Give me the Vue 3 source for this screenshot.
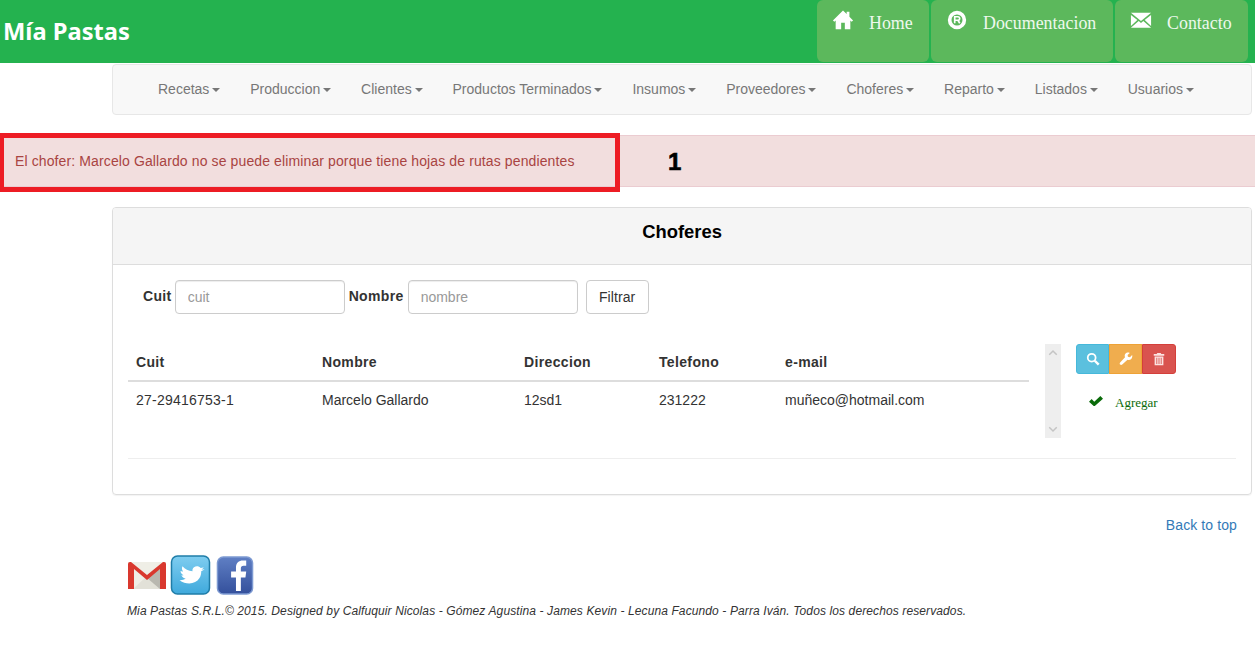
<template>
  <div class="page">
    <header class="top">
      <div class="brand">Mía Pastas</div>
      <div class="top-links">
        <a v-for="l in topLinks" :key="l.text" class="top-link" :style="{ width: l.w + 'px' }">
          <svg class="top-ico" viewBox="0 0 24 24">
            <path v-if="l.icon === 'home'" fill="#fff" d="M12 1.500 1 12.500l1.600 1.400L4 12.600V22h6v-7h4v7h6v-9.400l1.400 1.300 1.600-1.400L19 8.500V3h-3v2.500z" />
            <g v-else-if="l.icon === 'reg'" fill="none" stroke="#fff">
              <circle cx="12" cy="12" r="8" stroke-width="4" />
              <path stroke-width="1.800" d="M9.500 15.500v-7H13a1.900 1.900 0 0 1 0 3.800H9.500m3.500 0 2 3.200" />
            </g>
            <path v-else fill="#fff" d="M1 4h22L12 13zM1 6.500 8 12 1 18.500zM23 6.500 16 12l7 6.500zM9.500 13.200 12 15.300l2.500-2.100L23 20.500H1z" />
          </svg>
          <span>{{ l.text }}</span>
        </a>
      </div>
    </header>

    <nav class="menu">
      <a v-for="m in menu" :key="m" class="menu-item">{{ m }}<i class="caret"></i></a>
    </nav>

    <div class="alert">
      <span class="alert-text">El chofer: Marcelo Gallardo no se puede eliminar porque tiene hojas de rutas pendientes</span>
      <div class="mark"></div>
      <b class="mark-num">1</b>
    </div>

    <section class="panel">
      <h3 class="panel-head">Choferes</h3>
      <div class="panel-body">
        <form class="filter" @submit.prevent>
          <label class="lab">Cuit</label>
          <input class="inp" placeholder="cuit" />
          <label class="lab lab-2">Nombre</label>
          <input class="inp inp-2" placeholder="nombre" />
          <button class="btn-filter">Filtrar</button>
        </form>

        <div class="grid-row">
          <table class="tbl">
            <thead>
              <tr>
                <th class="c1">Cuit</th>
                <th class="c2">Nombre</th>
                <th class="c3">Direccion</th>
                <th class="c4">Telefono</th>
                <th>e-mail</th>
              </tr>
            </thead>
            <tbody>
              <tr>
                <td class="cuit">27-29416753-1</td>
                <td>Marcelo Gallardo</td>
                <td>12sd1</td>
                <td>231222</td>
                <td>muñeco@hotmail.com</td>
              </tr>
            </tbody>
          </table>

          <div class="scroll">
            <svg viewBox="0 0 16 12" class="arrow"><path d="M3 9l5-5 5 5" fill="none" stroke="#c4c4c4" stroke-width="2" /></svg>
            <svg viewBox="0 0 16 12" class="arrow"><path d="M3 3l5 5 5-5" fill="none" stroke="#c4c4c4" stroke-width="2" /></svg>
          </div>

          <div class="actions">
            <div class="btn-group">
              <button class="act act-info">
                <svg viewBox="0 0 16 16" class="act-ico"><circle cx="6.500" cy="6.500" r="4.500" fill="none" stroke="#fff" stroke-width="2" /><path d="M10 10l4.500 4.500" stroke="#fff" stroke-width="2.800" /></svg>
              </button>
              <button class="act act-warn">
                <svg viewBox="0 0 16 16" class="act-ico"><path fill="#fff" d="M15 3.500 12.500 6 10.200 5.500 9.800 3.500 12.300 1C10.300.2 8.300.8 7.300 2 6.400 3.200 6.300 4.700 6.900 6L1.300 12c-.7.800-.6 1.800 0 2.400.7.700 1.700.7 2.400 0L9.700 8.800c1.600.6 3.200.2 4.300-.9C15.100 6.800 15.500 5 15 3.500z" /></svg>
              </button>
              <button class="act act-del">
                <svg viewBox="0 0 16 16" class="act-ico"><path fill="#fbe3e2" fill-rule="evenodd" d="M6 1h4l.6 1.200H14v2H2v-2h3.400zM3 5.200h10V15H3zm2 1.400v7h1v-7zm2.500 0v7h1v-7zm2.500 0v7h1v-7z" /></svg>
              </button>
            </div>
            <a class="add">
              <svg viewBox="0 0 16 12" class="add-ico"><path fill="#0a6b0a" d="M0 6.500 3 3.500 6 6.500 13 0 16 3 6 12z" /></svg>
              <span>Agregar</span>
            </a>
          </div>
        </div>

        <hr class="rule" />
      </div>
    </section>

    <div class="back"><a>Back to top</a></div>

    <footer class="foot">
      <div class="social">
        <svg viewBox="0 0 40 29" class="gmail">
          <rect x="1" y="1" width="38" height="27" fill="#efeee6" />
          <path d="M6 28 20 15l14 13z" fill="#e2e1d8" />
          <path d="M33 7v21L20 17z" fill="#b9b8b0" />
          <path d="M1 3q0-2 2-2h1l16 13L36 1h1q2 0 2 2v25h-6V8L20 19 7 8v20H1z" fill="#d9382e" />
        </svg>
        <svg viewBox="0 0 40 40" class="tw">
          <defs>
            <linearGradient id="twg" x1="0" y1="0" x2="0" y2="1">
              <stop offset="0" stop-color="#7fcdf0" />
              <stop offset="1" stop-color="#3fa9dc" />
            </linearGradient>
          </defs>
          <rect x="1" y="1" width="38" height="38" rx="6" fill="url(#twg)" stroke="#1f7da8" stroke-width="1.500" />
          <path fill="#fff" d="M34 14c-1 .4-2 .5-3 .5 1-.6 1.800-1.300 2.200-2.300-1 .5-2 .8-3 .9C28.500 11 25.500 10.800 23.500 12.300c-1.200 1-1.800 2.400-1.500 3.900-4-.3-7.500-2-10-5-1 1.800-.6 3.800.6 5.200-1 .1-1.800 0-2.600-.4.200 2 1.300 3.500 3.200 4.300-.8.200-1.500.2-2.300 0 .8 1.800 2.300 3 4.300 3.300-1.800 1.200-4 1.800-6.200 1.600C16 30 25 29.500 29 23c1.300-2.200 1.800-4.500 1.700-6.800C32 15.800 33.200 15 34 14z" />
        </svg>
        <svg viewBox="0 0 38 40" class="fb">
          <defs>
            <linearGradient id="fbg" x1="0" y1="0" x2="0" y2="1">
              <stop offset="0" stop-color="#5f7fc4" />
              <stop offset="1" stop-color="#34509c" />
            </linearGradient>
          </defs>
          <rect x="1" y="1" width="36" height="38" rx="6" fill="url(#fbg)" stroke="#7d9ad2" stroke-width="1.500" />
          <path fill="#fff" d="M20 36V22h-5v-6h5v-4c0-5 3-7.500 7-7.500 1.500 0 3 .1 3.500.2v5.300h-2.700c-2 0-2.800 1-2.800 2.600V16h5.500l-.8 6H25v14z" />
        </svg>
      </div>
      <p class="legal">Mia Pastas S.R.L.© 2015. Designed by Calfuquir Nicolas - Gómez Agustina - James Kevin - Lecuna Facundo - Parra Iván. Todos los derechos reservados.</p>
    </footer>
  </div>
</template>

<script setup>
const topLinks = [
  { text: 'Home', icon: 'home', w: 112 },
  { text: 'Documentacion', icon: 'reg', w: 182 },
  { text: 'Contacto', icon: 'mail', w: 133 }
]
const menu = ['Recetas', 'Produccion', 'Clientes', 'Productos Terminados', 'Insumos', 'Proveedores', 'Choferes', 'Reparto', 'Listados', 'Usuarios']
</script>

<style>
html, body {
  margin: 0;
  background: #fff;
}
</style>

<style scoped>
.page {
  width: 1255px;
  height: 656px;
  overflow: hidden;
  font-family: "Liberation Sans", Arial, sans-serif;
  font-size: 14px;
  color: #333;
}
.top {
  height: 63px;
  background: #24b24f;
  display: flex;
  justify-content: space-between;
  box-sizing: border-box;
  padding-right: 7px;
}
.brand {
  font-family: "Noto Sans", sans-serif;
  font-weight: 700;
  font-size: 23.700px;
  line-height: 63px;
  color: #fff;
  padding-left: 3px;
}
.top-links {
  display: flex;
  gap: 2px;
}
.top-link {
  background: #5cb85c;
  border-radius: 6px;
  height: 62px;
  box-sizing: border-box;
  padding: 9px 0 0 15px;
  display: flex;
  align-items: flex-start;
  gap: 15px;
  color: #eef8ee;
  font-family: "Liberation Serif", serif;
  font-size: 17.900px;
  line-height: 28px;
}
.top-ico {
  width: 22px;
  height: 22px;
  flex: none;
}
.menu {
  box-sizing: border-box;
  width: 1140px;
  height: 51px;
  margin: 1px 0 0 112px;
  padding: 0 0 2px 30px;
  background: #f8f8f8;
  border: 1px solid #e7e7e7;
  border-radius: 4px;
  display: flex;
  align-items: center;
}
.menu-item {
  color: #777;
  padding: 0 15px;
  white-space: nowrap;
}
.caret {
  display: inline-block;
  margin-left: 2.850px;
  vertical-align: middle;
  border-top: 4px solid #777;
  border-left: 4px solid transparent;
  border-right: 4px solid transparent;
}
.alert {
  position: relative;
  box-sizing: border-box;
  height: 52px;
  margin-top: 20px;
  padding: 15px;
  background: #f2dede;
  border: 1px solid #ebccd1;
  border-width: 1px 0;
  color: #a94442;
  line-height: 20px;
}
.alert-text {
  letter-spacing: 0.116px;
}
.mark {
  position: absolute;
  left: 0;
  top: -3px;
  width: 620px;
  height: 59px;
  box-sizing: border-box;
  border: 5px solid #ed1c24;
  border-left-width: 4px;
}
.mark-num {
  position: absolute;
  left: 668px;
  top: 12px;
  font-size: 24px;
  line-height: 28px;
  color: #000;
  -webkit-text-stroke: 0.6px #000;
}
.panel {
  box-sizing: border-box;
  width: 1140px;
  height: 288px;
  margin: 20px 0 0 112px;
  border: 1px solid #ddd;
  border-radius: 4px;
  box-shadow: 0 1px 1px rgba(0, 0, 0, 0.05);
}
.panel-head {
  margin: 0;
  height: 57px;
  box-sizing: border-box;
  background: #f5f5f5;
  border-bottom: 1px solid #ddd;
  border-radius: 3px 3px 0 0;
  text-align: center;
  font-size: 18.400px;
  font-weight: 700;
  line-height: 47px;
  color: #000;
}
.panel-body {
  padding: 15px 15px 0;
}
.filter {
  display: flex;
  align-items: center;
  padding-left: 15px;
  height: 34px;
}
.lab {
  font-weight: 700;
  letter-spacing: 0.350px;
  margin-right: 3px;
  position: relative;
  top: -1px;
}
.lab-2 {
  margin: 0 4px;
}
.inp {
  box-sizing: border-box;
  width: 170px;
  height: 34px;
  padding: 6px 12px;
  border: 1px solid #ccc;
  border-radius: 4px;
  font: inherit;
  color: #555;
  outline: none;
  box-shadow: inset 0 1px 1px rgba(0, 0, 0, 0.075);
}
.inp::placeholder {
  color: #999;
}
.inp-2 {
  margin-right: 8px;
}
.btn-filter {
  height: 34px;
  width: 63px;
  padding: 0;
  background: #fff;
  border: 1px solid #ccc;
  border-radius: 4px;
  font: inherit;
  letter-spacing: 0.100px;
  color: #333;
}
.grid-row {
  display: flex;
  align-items: flex-start;
  margin-top: 30px;
}
.tbl {
  width: 901px;
  border-collapse: collapse;
  table-layout: fixed;
  margin-top: 0;
}
.tbl th {
  text-align: left;
  height: 37px;
  padding: 0 8px 8px;
  border-bottom: 2px solid #ddd;
  vertical-align: bottom;
  box-sizing: border-box;
  line-height: 20px;
  letter-spacing: 0.350px;
}
.tbl td {
  padding: 8px;
  line-height: 20px;
}
.tbl td.cuit {
  letter-spacing: 0.230px;
}
.c1 { width: 186px; }
.c2 { width: 202px; }
.c3 { width: 135px; }
.c4 { width: 126px; }
.scroll {
  width: 16px;
  height: 94px;
  margin-left: 16px;
  background: #eee;
  display: flex;
  flex-direction: column;
  justify-content: space-between;
  align-items: center;
  padding: 4px 0;
  box-sizing: border-box;
}
.arrow {
  width: 12px;
  height: 9px;
}
.actions {
  margin-left: 15px;
  width: 100px;
}
.btn-group {
  display: flex;
  height: 30px;
}
.act {
  width: 33px;
  flex: none;
  border: 1px solid transparent;
  padding: 0;
  display: flex;
  align-items: center;
  justify-content: center;
}
.act-info {
  background: #5bc0de;
  border-color: #46b8da;
  border-radius: 3px 0 0 3px;
}
.act-warn {
  background: #f0ad4e;
  border-color: #eea236;
}
.act-del {
  width: 34px;
  background: #d9534f;
  border-color: #d43f3a;
  border-radius: 0 3px 3px 0;
}
.act-ico {
  width: 14px;
  height: 14px;
}
.add {
  display: flex;
  align-items: center;
  margin: 21px 0 0 13px;
  font-family: "Liberation Serif", serif;
  font-size: 13px;
  color: #0a6b0a;
}
.add-ico {
  width: 14px;
  height: 10.500px;
  margin: 0 12px 4px 0;
}
.rule {
  margin: 20px 0 0;
  border: 0;
  border-top: 1px solid #eee;
}
.back {
  margin: 20px 18px 0 0;
  text-align: right;
  line-height: 20px;
  letter-spacing: 0.100px;
}
.back a {
  color: #337ab7;
}
.foot {
  margin: 20px 0 0 127px;
}
.social {
  display: flex;
  align-items: center;
  height: 40px;
  gap: 3px;
}
.gmail { width: 40px; height: 29px; }
.tw { width: 41px; height: 40px; margin-right: 2px; }
.fb { width: 38px; height: 39px; }
.legal {
  margin: 8px 0 0;
  font-size: 12px;
  font-style: italic;
  line-height: 17px;
  letter-spacing: 0.110px;
}
</style>
